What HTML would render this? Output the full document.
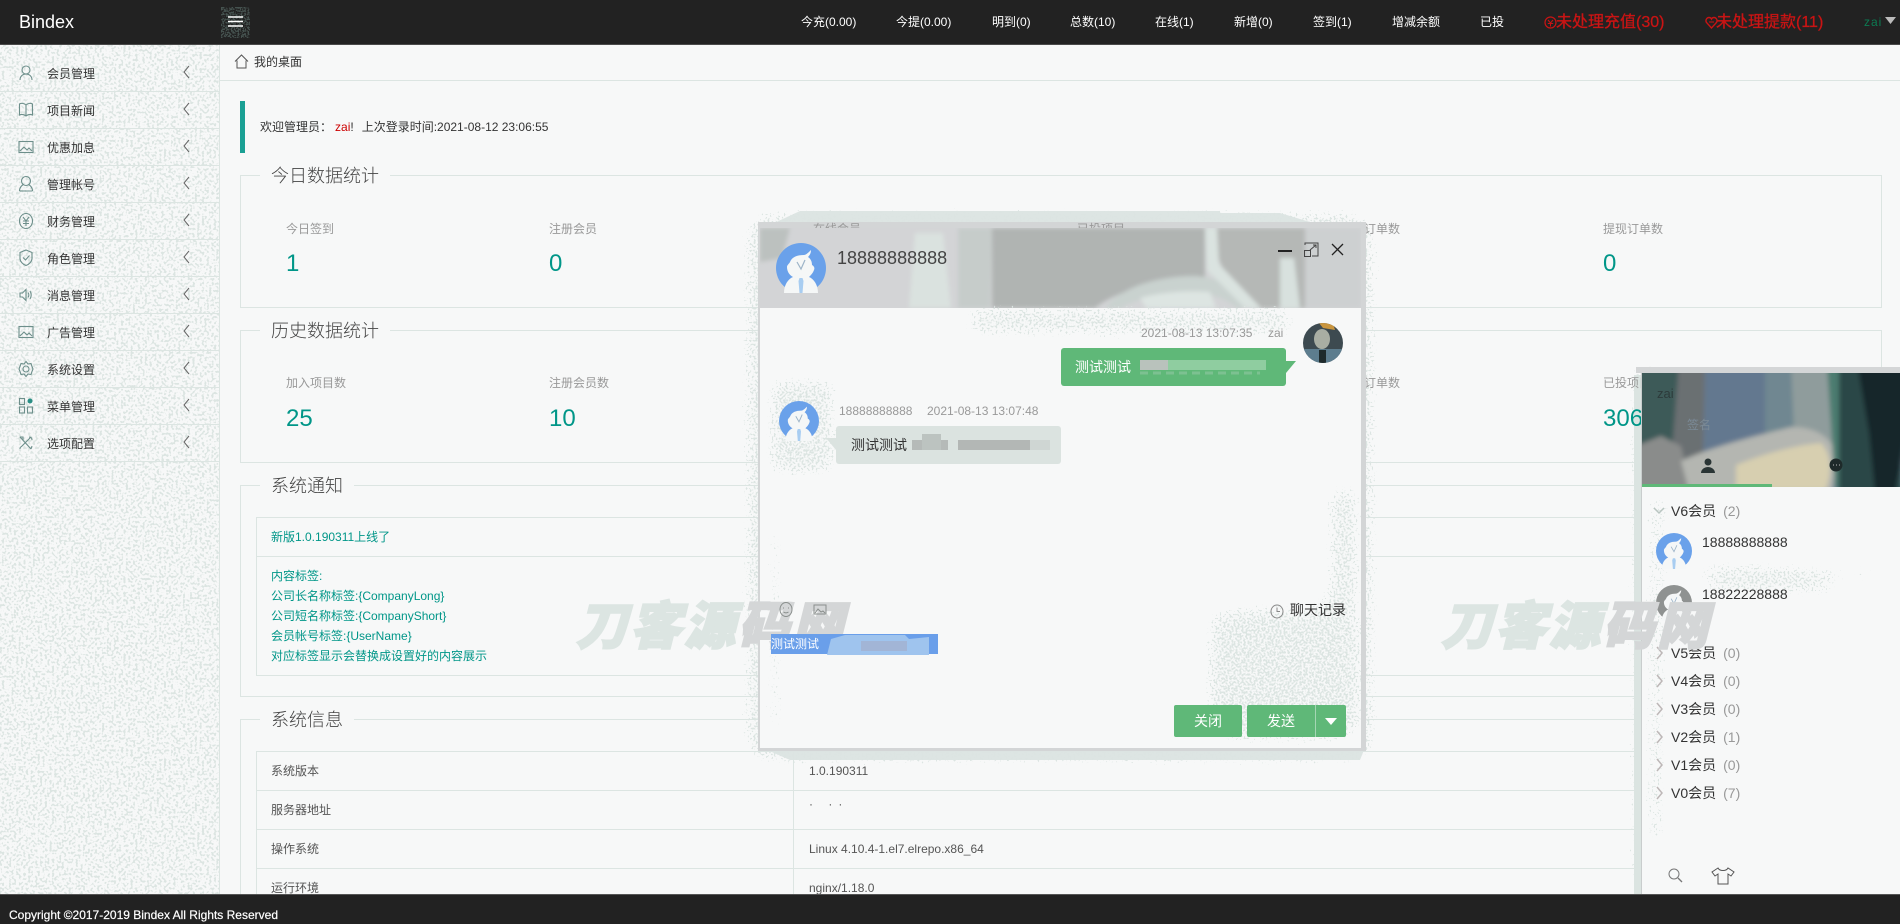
<!DOCTYPE html>
<html lang="zh"><head><meta charset="utf-8"><title>Bindex</title>
<style>
html,body{margin:0;padding:0;width:1900px;height:924px;overflow:hidden;background:#f7f8f8}
body{position:relative;font:12px/20px "Liberation Sans","Noto Sans CJK SC",sans-serif;color:#444}
.a,.a *{box-sizing:border-box}
.a{position:absolute;white-space:nowrap}
#top{left:0;top:0;width:1900px;height:45px;background:#222;border-bottom:1px solid #4a4a4a;z-index:20}
#top .n{position:absolute;top:12px;color:#fff;line-height:20px}
#top .r{position:absolute;top:11px;color:#c91414;font-size:16px;line-height:24px;-webkit-text-stroke:.3px #c91414}
#side{left:0;top:45px;width:220px;height:849px;border-right:1px solid #dce5e2}
.row{position:absolute;left:0;width:219px;height:37px;border-bottom:1px solid #dce5e2}
.row b{position:absolute;left:47px;top:9px;font-weight:400;color:#333;line-height:20px}
.row svg{position:absolute;margin-top:1px}
.fs{border:1px solid #dce5e2;left:240px;width:1642px}
.lg{background:#f7f8f8;font-size:18px;line-height:24px;color:#444;padding:0 11px;font-weight:300;margin-top:1px}
.lb{color:#999;line-height:20px;z-index:4}
.v{color:#009688;font-size:24px;line-height:30px;z-index:4}
.tl{color:#009688;left:271px;line-height:20px}
.hl{left:256px;width:1609px;height:1px;background:#dce5e2}
.g{fill:none;stroke:#6d8f8b;stroke-width:1.1}
.b{background:#5fb878;color:#fff;font-size:14px;text-align:center;border-radius:2px}
.grp{left:1671px;font-size:14px;line-height:20px;color:#333}
.grp i{font-style:normal;color:#999;margin-left:7px}
.wm{font:italic 900 51px/60px "Liberation Sans","Noto Sans CJK SC",sans-serif;color:#dce5e2;letter-spacing:3px;z-index:8;-webkit-text-stroke:2px #dce5e2}
.wm span{color:#d4d6d7;-webkit-text-stroke:2px #d4d6d7}
</style></head><body>
<svg width="0" height="0" style="position:absolute">
<defs>
<filter id="hard" x="0" y="0" width="1900" height="924" filterUnits="userSpaceOnUse" color-interpolation-filters="sRGB">
<feTurbulence type="fractalNoise" baseFrequency=".42" numOctaves="1" seed="4" result="n"/>
<feColorMatrix in="n" type="matrix" values="0 0 0 0 .863 0 0 0 0 .898 0 0 0 0 .886 0 0 0 12 -6.2" result="c"/>
<feComposite in="c" in2="SourceAlpha" operator="in"/>
</filter>
<filter id="soft" x="0" y="0" width="1900" height="924" filterUnits="userSpaceOnUse" color-interpolation-filters="sRGB">
<feGaussianBlur in="SourceAlpha" stdDeviation="12" result="b"/>
<feTurbulence type="fractalNoise" baseFrequency=".5" numOctaves="1" seed="9" result="n"/>
<feComposite in="n" in2="b" operator="arithmetic" k1="1" k2="0" k3="0" k4="0" result="m"/>
<feColorMatrix in="m" type="matrix" values="0 0 0 0 .863 0 0 0 0 .898 0 0 0 0 .886 0 0 0 14 -6.6"/>
</filter>
<filter id="dark" x="0" y="0" width="1900" height="924" filterUnits="userSpaceOnUse" color-interpolation-filters="sRGB">
<feTurbulence type="fractalNoise" baseFrequency=".6" numOctaves="1" seed="7" result="n"/>
<feColorMatrix in="n" type="matrix" values="0 0 0 0 .27 0 0 0 0 .32 0 0 0 0 .31 0 0 0 12 -5.6" result="c"/>
<feComposite in="c" in2="SourceAlpha" operator="in"/>
</filter>
<filter id="bl5"><feGaussianBlur stdDeviation="2.5"/></filter>
<filter id="bl3"><feGaussianBlur stdDeviation="2"/></filter>
<clipPath id="dlgbody"><rect x="760" y="228" width="601" height="520"/><rect x="1641" y="487" width="259" height="407"/></clipPath>
<symbol id="av" viewBox="0 0 50 50">
<circle cx="25" cy="25" r="25" fill="currentColor"/>
<path d="M8 50c0-8 4-14 9-16-4-2-6-6-6-10 0-2 2-3 3-5 2-5 7-7 14-7 2 0 5-3 7-5 0 3-1 5-3 7 3 2 4 5 4 8 2 1 3 3 2 5-1 3-3 5-5 7 5 2 9 8 9 16z" fill="#f5f7f7"/>
<path d="M21 19l4 7 4-9" fill="none" stroke="#9db4c8" stroke-width="1.2"/>
<path d="M23.500 35h3l1 3-1 12h-3l-1-12z" fill="#a8cdf1"/>
</symbol>
</defs></svg>

<!-- top -->
<div class="a" id="top">
<div style="position:absolute;left:19px;top:9px;color:#fff;font-size:18px;line-height:26px">Bindex</div>
<svg style="position:absolute;left:218px;top:4px" width="36" height="36"><rect x="3" y="3" width="29" height="31" fill="#fff" filter="url(#dark)"/><path d="M10 13h15M10 17.500h15M10 22h15" stroke="#fff" stroke-width="1.500" fill="none"/></svg>
<span class="n" style="left:801px">今充(0.00)</span>
<span class="n" style="left:896px">今提(0.00)</span>
<span class="n" style="left:992px">明到(0)</span>
<span class="n" style="left:1070px">总数(10)</span>
<span class="n" style="left:1155px">在线(1)</span>
<span class="n" style="left:1234px">新增(0)</span>
<span class="n" style="left:1313px">签到(1)</span>
<span class="n" style="left:1392px">增减余额</span>
<span class="n" style="left:1480px">已投</span>
<svg style="position:absolute;left:1544px;top:16px" width="13" height="13"><circle cx="6.500" cy="6.500" r="5.500" fill="none" stroke="#c91414" stroke-width="1.200"/><path d="M4 4l2.500 3L9 4M3.800 7.500h5.400M6.500 7v3.500" stroke="#c91414" fill="none"/></svg>
<span class="r" style="left:1556px">未处理充值(30)</span>
<svg style="position:absolute;left:1705px;top:16px" width="13" height="13"><path d="M6.500 12L1.500 6.500C0 4 2 1.500 4 1.500c1 0 2 .5 2.500 1.500C7 2 8 1.500 9 1.500c2 0 4 2.500 2.500 5z" fill="none" stroke="#c91414" stroke-width="1.400"/><path d="M4 6h5" stroke="#c91414"/></svg>
<span class="r" style="left:1716px">未处理提款(11)</span>
<span class="n" style="left:1864px;color:#0c7b52;letter-spacing:1px">zai</span>
<svg style="position:absolute;left:1885px;top:17px" width="12" height="8"><path d="M0 0h11L5.500 7z" fill="#bbb"/></svg>
</div>

<!-- sidebar -->
<svg class="a" style="left:0;top:45px;z-index:0" width="219" height="849"><rect width="219" height="849" fill="#000" filter="url(#hard)"/></svg>
<div class="a" id="side">
<div class="row" style="top:10px"><b>会员管理</b><svg style="left:18px;top:8px" width="16" height="18" class="g"><circle cx="8" cy="6" r="4"/><path d="M2 16c0-4 3-6 6-6s6 2 6 6"/></svg><svg style="left:182px;top:9px" width="9" height="14"><path d="M7 1L2 7l5 6" fill="none" stroke="#666"/></svg></div>
<div class="row" style="top:47px"><b>项目新闻</b><svg style="left:18px;top:9px" width="16" height="15" class="g"><path d="M8 3C6 1 3 1 1.500 2v11c2-1 4-1 6.500 1 2.500-2 4.500-2 6.500-1V2C13 1 10 1 8 3zM8 3v11"/></svg><svg style="left:182px;top:9px" width="9" height="14"><path d="M7 1L2 7l5 6" fill="none" stroke="#666"/></svg></div>
<div class="row" style="top:84px"><b>优惠加息</b><svg style="left:18px;top:10px" width="16" height="14" class="g"><rect x="1" y="1.500" width="14" height="11"/><path d="M2 11l4-4 3 3 2-2 3 3"/></svg><svg style="left:182px;top:9px" width="9" height="14"><path d="M7 1L2 7l5 6" fill="none" stroke="#666"/></svg></div>
<div class="row" style="top:121px"><b>管理帐号</b><svg style="left:18px;top:8px" width="16" height="18" class="g"><circle cx="8" cy="6" r="4.500"/><path d="M1.500 16c0-4 3-6 3.500-6M14.500 16c0-4-3-6-3.500-6M1.500 16h13"/></svg><svg style="left:182px;top:9px" width="9" height="14"><path d="M7 1L2 7l5 6" fill="none" stroke="#666"/></svg></div>
<div class="row" style="top:158px"><b>财务管理</b><svg style="left:18px;top:8px" width="16" height="18" class="g"><ellipse cx="8" cy="9" rx="6.500" ry="7.500"/><path d="M5 5l3 4 3-4M5 9h6M5 11.500h6M8 9v5"/></svg><svg style="left:182px;top:9px" width="9" height="14"><path d="M7 1L2 7l5 6" fill="none" stroke="#666"/></svg></div>
<div class="row" style="top:195px"><b>角色管理</b><svg style="left:18px;top:8px" width="16" height="18" class="g"><path d="M8 1l6 2.500v6c0 3-3 6-6 7-3-1-6-4-6-7v-6z"/><path d="M5 8.500l2.500 2.500 4-4.500"/></svg><svg style="left:182px;top:9px" width="9" height="14"><path d="M7 1L2 7l5 6" fill="none" stroke="#666"/></svg></div>
<div class="row" style="top:232px"><b>消息管理</b><svg style="left:18px;top:9px" width="16" height="16" class="g"><path d="M2 6h2.500L8 2.500v11L4.500 10H2zM10 5.500c1 1.500 1 3.500 0 5M12 4c1.500 2.500 1.500 5.500 0 8"/></svg><svg style="left:182px;top:9px" width="9" height="14"><path d="M7 1L2 7l5 6" fill="none" stroke="#666"/></svg></div>
<div class="row" style="top:269px"><b>广告管理</b><svg style="left:18px;top:10px" width="16" height="14" class="g"><rect x="1" y="1.500" width="14" height="11"/><path d="M2 11l4-4 3 3 2-2 3 3"/></svg><svg style="left:182px;top:9px" width="9" height="14"><path d="M7 1L2 7l5 6" fill="none" stroke="#666"/></svg></div>
<div class="row" style="top:306px"><b>系统设置</b><svg style="left:18px;top:8px" width="16" height="18" class="g"><circle cx="8" cy="9" r="3"/><path d="M8 1.500l2 2.500 3-.5 1 3 1 2.500-1 2.500-1 3-3-.5-2 2.500-2-2.500-3 .5-1-3L1 9l1-2.500 1-3 3 .5z"/></svg><svg style="left:182px;top:9px" width="9" height="14"><path d="M7 1L2 7l5 6" fill="none" stroke="#666"/></svg></div>
<div class="row" style="top:343px"><b>菜单管理</b><svg style="left:18px;top:8px" width="16" height="17" class="g"><rect x="1.500" y="1.500" width="5" height="6"/><rect x="1.500" y="10" width="5" height="6"/><rect x="9.500" y="10" width="5" height="6"/><circle cx="12" cy="4" r="2.500" fill="#2a8f85" stroke="none"/></svg><svg style="left:182px;top:9px" width="9" height="14"><path d="M7 1L2 7l5 6" fill="none" stroke="#666"/></svg></div>
<div class="row" style="top:380px"><b>选项配置</b><svg style="left:18px;top:9px" width="16" height="16" class="g"><path d="M2 2l11 12M13 2L3 12M2 2h3v3M13 14l1-3M11 2c2 0 3 1 3 3M2 14c0-1 0-2 1-2"/></svg><svg style="left:182px;top:9px" width="9" height="14"><path d="M7 1L2 7l5 6" fill="none" stroke="#666"/></svg></div>
</div>

<!-- breadcrumb -->
<svg class="a" style="left:234px;top:54px" width="15" height="15"><path d="M1 7.500L7.500 1 14 7.500M3 6.500V14h9V6.500" fill="none" stroke="#555"/></svg>
<div class="a" style="left:254px;top:52px;color:#333">我的桌面</div>
<div class="a" style="left:220px;top:80px;width:1680px;height:1px;background:#dce5e2"></div>
<div class="a" style="left:240px;top:101px;width:5px;height:52px;background:#1aa094"></div>
<div class="a" style="left:260px;top:117px;color:#333">欢迎管理员：<span style="color:#c00;margin-left:3px">zai</span>!<span style="margin-left:8px">上次登录时间:2021-08-12 23:06:55</span></div>

<!-- fieldsets -->
<div class="a fs" style="top:175px;height:133px"></div>
<div class="a lg" style="left:260px;top:163px">今日数据统计</div>
<div class="a lb" style="left:286px;top:219px">今日签到</div><div class="a v" style="left:286px;top:249px">1</div>
<div class="a lb" style="left:549px;top:219px">注册会员</div><div class="a v" style="left:549px;top:249px">0</div>
<div class="a lb" style="left:1603px;top:219px">提现订单数</div><div class="a v" style="left:1603px;top:249px">0</div>
<div class="a lb" style="left:1340px;top:219px">充值订单数</div>

<div class="a fs" style="top:330px;height:133px"></div>
<div class="a lg" style="left:260px;top:318px">历史数据统计</div>
<div class="a lb" style="left:286px;top:373px">加入项目数</div><div class="a v" style="left:286px;top:404px">25</div>
<div class="a lb" style="left:549px;top:373px">注册会员数</div><div class="a v" style="left:549px;top:404px">10</div>
<div class="a lb" style="left:1340px;top:373px">充值订单数</div><div class="a v" style="left:1340px;top:404px">18</div>
<div class="a lb" style="left:1603px;top:373px">已投项目</div><div class="a v" style="left:1603px;top:404px">3060</div>

<div class="a fs" style="top:485px;height:212px"></div>
<div class="a lg" style="left:260px;top:473px">系统通知</div>
<div class="a" style="left:256px;top:517px;width:1610px;height:159px;border:1px solid #dce5e2"></div>
<div class="a hl" style="top:556px"></div>
<div class="a tl" style="top:527px">新版1.0.190311上线了</div>
<div class="a tl" style="top:566px">内容标签:</div>
<div class="a tl" style="top:586px">公司长名称标签:{CompanyLong}</div>
<div class="a tl" style="top:606px">公司短名称标签:{CompanyShort}</div>
<div class="a tl" style="top:626px">会员帐号标签:{UserName}</div>
<div class="a tl" style="top:646px">对应标签显示会替换成设置好的内容展示</div>

<div class="a fs" style="top:719px;height:240px"></div>
<div class="a lg" style="left:260px;top:707px">系统信息</div>
<div class="a" style="left:256px;top:751px;width:1610px;height:200px;border:1px solid #dce5e2"></div>
<div class="a" style="left:793px;top:751px;width:1px;height:200px;background:#dce5e2"></div>
<div class="a hl" style="top:790px"></div><div class="a hl" style="top:829px"></div><div class="a hl" style="top:868px"></div>
<div class="a" style="left:271px;top:761px;color:#555">系统版本</div><div class="a" style="left:809px;top:761px;color:#555">1.0.190311</div>
<div class="a" style="left:271px;top:800px;color:#555">服务器地址</div><div class="a" style="left:809px;top:794px;color:#555;letter-spacing:6px">·    ··</div>
<div class="a" style="left:271px;top:839px;color:#555">操作系统</div><div class="a" style="left:809px;top:839px;color:#555">Linux 4.10.4-1.el7.elrepo.x86_64</div>
<div class="a" style="left:271px;top:878px;color:#555">运行环境</div><div class="a" style="left:809px;top:878px;color:#555">nginx/1.18.0</div>

<!-- halo backgrounds -->
<svg class="a" style="left:0;top:0;z-index:3" width="1900" height="924">
<g filter="url(#soft)"><rect x="738" y="205" width="644" height="564" rx="30"/><rect x="1625" y="358" width="40" height="536"/></g>
<path d="M800 211h420v2h60l40 12v10h46v510l-6 15H790l-32-14V245l12-20z" fill="#dbe4e1" opacity=".95"/>
<rect x="1634" y="375" width="7" height="519" fill="#dbe4e1"/>
<rect x="1636" y="367" width="264" height="6" fill="#d4d6d7"/>
</svg>

<!-- chat dialog -->
<div class="a" style="left:758px;top:222px;width:608px;height:529px;background:#d3d5d6;z-index:4"></div>
<div class="a" style="left:813px;top:219px;color:#999;height:9px;overflow:hidden;z-index:4">在线会员</div>
<div class="a" style="left:1077px;top:219px;color:#999;height:9px;overflow:hidden;z-index:4">已投项目</div>
<div class="a" style="left:760px;top:228px;width:601px;height:520px;background:#f7f8f8;z-index:4;overflow:hidden">
<svg style="position:absolute;left:0;top:0" width="601" height="80">
<rect width="601" height="80" fill="#d3d4d6"/>
<g filter="url(#bl3)">
<path d="M0 0h30l-8 30L0 34z" fill="#bcc1bf"/>
<path d="M155 5h28l8 75h-42z" fill="#dae2df"/>
<path d="M198 0h34l-2 80h-32z" fill="#c6ccca"/>
<path d="M232 0h213v50c-50 2-90 14-110 30H232z" fill="#b0b4b2"/>
<path d="M445 0h100v80H480z" fill="#b5b8b6"/>
<path d="M545 0h56v80h-56z" fill="#cdd0d1"/>
<path d="M345 80c16-20 50-32 90-32 30 2 50 16 62 32h-20c-12-10-24-14-40-14-30 0-60 4-76 14z" fill="#c9d2cf"/>
<path d="M445 0h12l2 36 42 44h-16l-38-38z" fill="#dae3e0"/>
<path d="M520 30h14l6 50h-20z" fill="#d8e1de"/>
<path d="M380 70c20-6 50-8 70-6l6 16h-70z" fill="#dde5e2"/>
</g></svg>
<svg style="position:absolute;left:16px;top:15px;color:#6aa1ea" width="50" height="50"><use href="#av"/></svg>
<div style="position:absolute;left:77px;top:18px;font-size:18px;line-height:24px;color:#444">18888888888</div>
<svg style="position:absolute;left:518px;top:14px" width="70" height="18"><path d="M0 9h14" stroke="#222" stroke-width="2"/><path d="M27 3V1h13v13h-6" fill="none" stroke="#444"/><rect x="26.500" y="8.500" width="6" height="6" fill="none" stroke="#444"/><path d="M32 8l6-5M35 3h3v3" fill="none" stroke="#444"/><path d="M54 2l11 11M65 2L54 13" stroke="#222" stroke-width="1.300"/></svg>
</div>
<div class="a" style="left:1641px;top:373px;width:259px;height:521px;background:#f7f8f8;z-index:4"></div>
<svg class="a" style="left:0;top:0;z-index:5" width="1900" height="924">
<g clip-path="url(#dlgbody)"><g filter="url(#soft)">
<rect x="960" y="300" width="340" height="42"/>
<rect x="762" y="372" width="80" height="110"/>
<path d="M1250 372c-100 10-190 50-220 120" stroke="#000" stroke-width="14" fill="none"/>
<path d="M994 500c-6 40 0 70 6 85" stroke="#000" stroke-width="12" fill="none"/>
<rect x="762" y="520" width="26" height="220"/>
<rect x="1200" y="600" width="170" height="148" rx="30"/>
<rect x="1322" y="480" width="44" height="130"/>
<rect x="1641" y="490" width="30" height="360"/>
<path d="M1680 565c60 0 120 0 190 10M1880 520c-20 60-10 100-20 130" stroke="#000" stroke-width="16" fill="none"/>
<rect x="1700" y="570" width="140" height="30"/>
<rect x="1641" y="490" width="259" height="14"/>
</g></g>
</svg>

<div class="a" style="left:1141px;top:323px;color:#999;z-index:6">2021-08-13 13:07:35</div>
<div class="a" style="left:1268px;top:323px;color:#999;z-index:6">zai</div>
<svg class="a" style="left:1303px;top:323px;z-index:6" width="40" height="40"><defs><clipPath id="mc"><ellipse cx="20" cy="20" rx="20" ry="20"/></clipPath></defs><g clip-path="url(#mc)"><rect width="40" height="40" fill="#3d4a50"/><rect y="26" width="40" height="14" fill="#5d7d8e"/><ellipse cx="19" cy="16" rx="8" ry="10" fill="#a9aea3"/><path d="M16 0h14l2 7-12-2z" fill="#c9953e"/><path d="M16 27h7v13h-7z" fill="#1e2a2b"/></g></svg>
<div class="a" style="left:1061px;top:348px;width:225px;height:38px;background:#5fb878;border-radius:3px;z-index:6"></div>
<svg class="a" style="left:1286px;top:361px;z-index:6" width="11" height="13"><path d="M0 0h10L0 12z" fill="#5fb878"/></svg>
<div class="a" style="left:1075px;top:357px;color:#fff;font-size:14px;z-index:6">测试测试</div>
<svg class="a" style="left:1136px;top:355px;z-index:6" width="150" height="30"><rect x="4" y="5" width="126" height="10" fill="#8fcda0"/><rect x="4" y="5" width="28" height="10" fill="#b9c2bc"/><path d="M4 18h120" stroke="#7cc191" stroke-width="3" stroke-dasharray="8 5"/></svg>

<svg class="a" style="left:779px;top:401px;color:#6aa1ea;z-index:6" width="40" height="40"><use href="#av"/></svg>
<div class="a" style="left:839px;top:401px;color:#999;z-index:6">18888888888</div>
<div class="a" style="left:927px;top:401px;color:#999;z-index:6">2021-08-13 13:07:48</div>
<div class="a" style="left:836px;top:426px;width:225px;height:38px;background:#dbe3e0;border-radius:3px;z-index:6"></div>
<svg class="a" style="left:826px;top:438px;z-index:6" width="11" height="13"><path d="M10 0v12L0 0z" fill="#dbe3e0"/></svg>
<div class="a" style="left:851px;top:435px;color:#333;font-size:14px;z-index:6">测试测试</div>
<svg class="a" style="left:910px;top:433px;z-index:6" width="145" height="26"><rect x="2" y="7" width="36" height="10" fill="#b5bab8"/><rect x="12" y="1" width="19" height="16" fill="#bcc3c0"/><rect x="48" y="7" width="72" height="10" fill="#b3b7b5"/><rect x="120" y="7" width="20" height="10" fill="#cfd6d3"/></svg>

<svg class="a" style="left:778px;top:601px;z-index:9" width="52" height="17"><ellipse cx="8" cy="8.500" rx="6" ry="7" fill="none" stroke="#8a8f8d"/><path d="M5.500 6.500v1M10.500 6.500v1M5.500 11c1.500 1 3.500 1 5 0" stroke="#8a8f8d" fill="none"/><rect x="36" y="4" width="12" height="9" fill="none" stroke="#8a8f8d"/><path d="M37 12l3-4 3 3 2-1 2 2" fill="none" stroke="#8a8f8d"/></svg>
<svg class="a" style="left:1270px;top:604px;z-index:6" width="14" height="15"><ellipse cx="7" cy="7.500" rx="6" ry="6.500" fill="none" stroke="#888"/><path d="M7 3.500v4h3" fill="none" stroke="#888"/></svg>
<div class="a" style="left:1290px;top:600px;color:#333;font-size:14px;z-index:6">聊天记录</div>

<div class="a" style="left:771px;top:634px;width:167px;height:20px;background:#6a9fea;color:#fff;line-height:20px;z-index:9">测试测试<svg style="position:absolute;left:50px;top:-1px" width="117" height="24"><path d="M10 6l14-4h60l4 4 20-2v18H6z" fill="#9fc4ee"/><rect x="40" y="8" width="46" height="10" fill="#a2b5d6"/></svg></div>

<div class="a b" style="left:1174px;top:705px;width:68px;height:32px;line-height:32px;z-index:6">关闭</div>
<div class="a b" style="left:1247px;top:705px;width:99px;height:32px;line-height:32px;text-align:left;padding-left:20px;z-index:6">发送
<span style="position:absolute;left:68px;top:0;width:1px;height:32px;background:#a5d6b4"></span>
<svg style="position:absolute;left:78px;top:13px" width="12" height="7"><path d="M0 0h12L6 7z" fill="#fff"/></svg></div>

<!-- right panel -->
<div class="a" style="left:1641px;top:373px;width:259px;height:521px;background:transparent;border-left:1px solid #c9cdcd;z-index:5;overflow:hidden">
<svg style="position:absolute;left:-1px;top:0" width="260" height="114">
<rect width="260" height="114" fill="#5d7885"/>
<g filter="url(#bl5)">
<path d="M-10-10h55l-6 110H-10z" fill="#3e5a59"/>
<path d="M38-10h28v100H30z" fill="#6a7072"/>
<path d="M64-10h62v85l-50 15-14-10z" fill="#64788f"/>
<path d="M124-10h30l10 80-40 10z" fill="#6f8791"/>
<path d="M150-10h40l8 90-44 4z" fill="#8f9c9c"/>
<path d="M-10 75l30-12 20 10 10 45H-10z" fill="#8a8c8b"/>
<path d="M40 88c30-14 70-24 110-34 20 0 36 6 45 24l-3 40H48z" fill="#b4b6b1"/>
<path d="M95 92c30-12 60-20 85-22 10 10 12 30 4 48H95z" fill="#d7cfb0"/>
<path d="M186-10h14l6 124h-12z" fill="#4b7c6f"/>
<path d="M198-10h62v130h-62z" fill="#2b4746"/>
<path d="M216-10h50v70l-12 60h-20l-6-60z" fill="#16262a"/>
</g></svg>
<div style="position:absolute;left:15px;top:11px;color:#2d3b3b;font-size:13px">zai</div>
<div style="position:absolute;left:45px;top:42px;color:#7b8a96;font-size:12px">签名</div>
<svg style="position:absolute;left:58px;top:84px" width="16" height="17"><circle cx="8" cy="5" r="3.500" fill="#2a3535"/><path d="M1 16c0-4 4-6 7-6s7 2 7 6z" fill="#2a3535"/></svg>
<svg style="position:absolute;left:187px;top:85px" width="14" height="14"><circle cx="7" cy="7" r="6.500" fill="#1e2a2a"/><path d="M4 7h1M7 7h1M10 7h1" stroke="#bbb"/></svg>
<div style="position:absolute;left:0;top:111px;width:130px;height:3px;background:#5fb878"></div>
</div>
<svg class="a" style="left:1653px;top:505px;z-index:6" width="12" height="12"><path d="M1 3l5 5 5-5" fill="none" stroke="#b9c5c1" stroke-width="1.500"/></svg>
<div class="a grp" style="top:501px;z-index:6">V6会员<i>(2)</i></div>
<svg class="a" style="left:1656px;top:533px;color:#6aa1ea;z-index:6" width="36" height="36"><use href="#av"/></svg>
<div class="a" style="left:1702px;top:532px;font-size:14px;color:#333;z-index:6">18888888888</div>
<svg class="a" style="left:1656px;top:585px;color:#8f9291;z-index:6" width="36" height="36"><use href="#av"/></svg>
<div class="a" style="left:1702px;top:584px;font-size:14px;color:#333;z-index:6">18822228888</div>
<svg class="a" style="left:1655px;top:644px;z-index:6" width="10" height="160"><g fill="none" stroke="#bdb7b7" stroke-width="1.500"><path d="M2 3l5 6-5 6"/><path d="M2 31l5 6-5 6"/><path d="M2 59l5 6-5 6"/><path d="M2 87l5 6-5 6"/><path d="M2 115l5 6-5 6"/><path d="M2 143l5 6-5 6"/></g></svg>
<div class="a grp" style="top:643px;z-index:6">V5会员<i>(0)</i></div>
<div class="a grp" style="top:671px;z-index:6">V4会员<i>(0)</i></div>
<div class="a grp" style="top:699px;z-index:6">V3会员<i>(0)</i></div>
<div class="a grp" style="top:727px;z-index:6">V2会员<i>(1)</i></div>
<div class="a grp" style="top:755px;z-index:6">V1会员<i>(0)</i></div>
<div class="a grp" style="top:783px;z-index:6">V0会员<i>(7)</i></div>
<svg class="a" style="left:1667px;top:867px;z-index:6" width="16" height="16"><circle cx="7" cy="7" r="5" fill="none" stroke="#777"/><path d="M11 11l4 4" stroke="#777" stroke-width="1.300"/></svg>
<svg class="a" style="left:1711px;top:867px;z-index:6" width="24" height="18"><path d="M7 1L1 5l3 4 3-2v10h10V7l3 2 3-4-6-4c-1 2-3 2.500-5 2.500S8 3 7 1z" fill="none" stroke="#555"/></svg>

<!-- watermarks -->
<div class="a wm" style="left:576px;top:597px">刀客源<span>码网</span></div>
<div class="a wm" style="left:1441px;top:597px">刀客源<span>码网</span></div>

<!-- footer -->
<div class="a" style="left:0;top:894px;width:1900px;height:30px;background:#222;border-top:1px solid #555;color:#fff;line-height:40px;padding-left:9px;z-index:20;font-weight:400;-webkit-text-stroke:.2px #fff">Copyright ©2017-2019 Bindex All Rights Reserved</div>
</body></html>
